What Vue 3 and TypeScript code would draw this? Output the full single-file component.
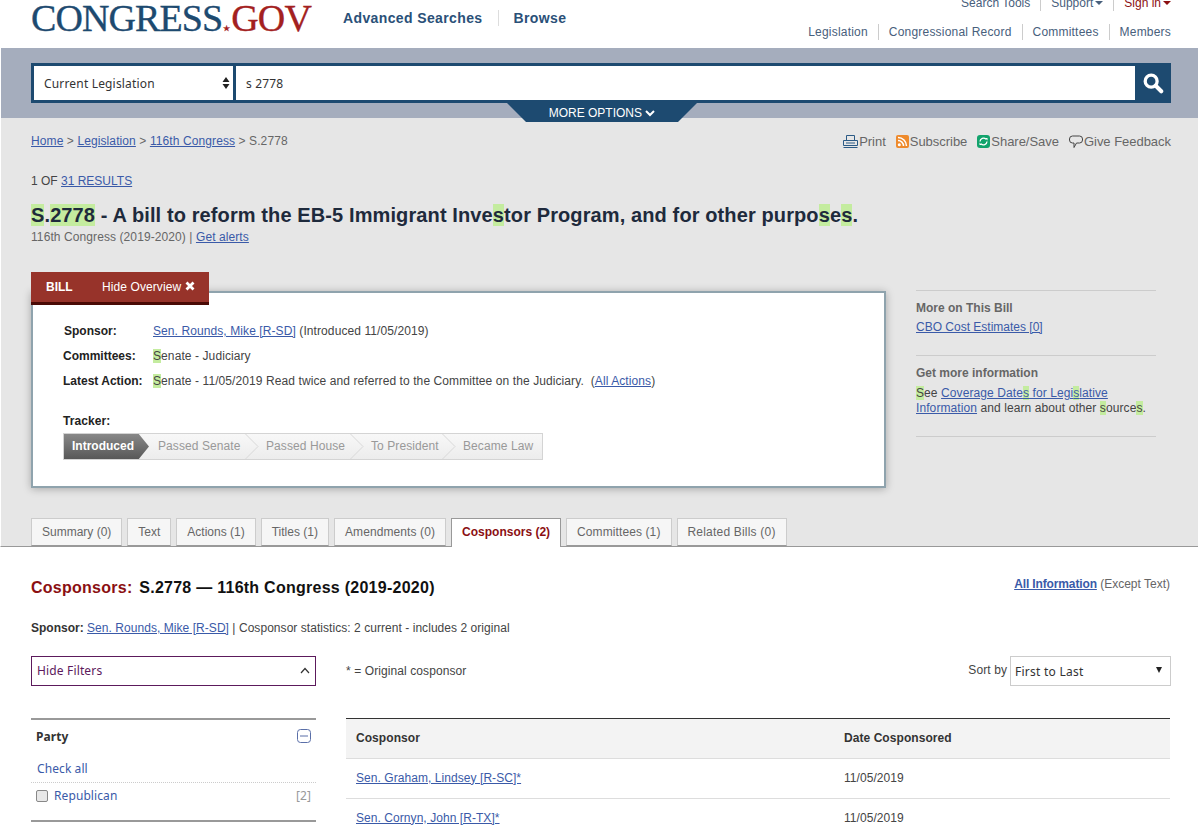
<template>
  <div class="page">
    <header class="top">
      <div class="logo">CONGRESS<span class="star">★</span><span class="gov">GOV</span></div>
      <nav class="main-nav">
        <a>Advanced Searches</a>
        <a>Browse</a>
      </nav>
      <div class="util">
        <div class="util-row first">
          <a>Search Tools</a>
          <a>Support<i class="caret"></i></a>
          <a class="signin">Sign in<i class="caret"></i></a>
        </div>
        <div class="util-row">
          <a v-for="item in collections" :key="item">{{ item }}</a>
        </div>
      </div>
    </header>

    <section class="band">
      <form class="search" @submit.prevent>
        <div class="scope">
          <span>Current Legislation</span>
          <svg width="8" height="14" viewBox="0 0 8 14"><path d="M4 1 7.500 6H.5zM4 13 .5 8h7z" fill="#222" /></svg>
        </div>
        <div class="query">s 2778</div>
        <button class="go" type="button" aria-label="Search">
          <svg width="22" height="22" viewBox="0 0 24 24"><circle cx="10" cy="10" r="6.500" fill="none" stroke="#fff" stroke-width="3.600" /><path d="m15 15 6 6" stroke="#fff" stroke-width="4.400" stroke-linecap="round" /></svg>
        </button>
      </form>
      <div class="more-wrap">
        <div class="more">MORE OPTIONS
          <svg width="10" height="8" viewBox="0 0 10 8"><path d="m1 2 4 4 4-4" fill="none" stroke="#fff" stroke-width="2" /></svg>
        </div>
      </div>
    </section>

    <section class="gray">
      <div class="crumb-row">
        <div class="crumbs"><a>Home</a> &gt; <a>Legislation</a> &gt; <a>116th Congress</a> &gt; S.2778</div>
        <div class="tools">
          <span class="tool">
            <svg width="15" height="13" viewBox="0 0 15 13"><path d="M3.500 5V.5h8V5M.5 5.500h14v5H.5zM.5 12.500h14M3 8h9" fill="none" stroke="#2b5a85" /></svg>Print
          </span>
          <span class="tool">
            <svg width="13" height="13" viewBox="0 0 13 13"><rect width="13" height="13" rx="2" fill="#ee8a2c" /><circle cx="3.300" cy="9.700" r="1.500" fill="#fff" /><path d="M2 5.500a5.500 5.500 0 0 1 5.500 5.500M2 2.500A8.500 8.500 0 0 1 10.500 11" fill="none" stroke="#fff" stroke-width="1.500" /></svg>Subscribe
          </span>
          <span class="tool">
            <svg width="13" height="13" viewBox="0 0 13 13"><rect width="13" height="13" rx="3" fill="#12a36c" /><path d="M3 6.500a3.500 3.500 0 0 1 6-2.300M10 6.500a3.500 3.500 0 0 1-6 2.300" fill="none" stroke="#fff" stroke-width="1.300" /><path d="M8 3h2.500v2.500zM5 10H2.500V7.500z" fill="#fff" /></svg>Share/Save
          </span>
          <span class="tool">
            <svg width="14" height="14" viewBox="0 0 14 14"><path d="M3.500 1h7A3 3 0 0 1 13.500 4v1a3 3 0 0 1-3 3H7.500L5 12.500V8H3.500a3 3 0 0 1-3-3V4a3 3 0 0 1 3-3z" fill="none" stroke="#444" /></svg>Give Feedback
          </span>
        </div>
      </div>

      <p class="results">1 OF <a>31 RESULTS</a></p>
      <h1 class="title"><mark>S</mark>.<mark>2778</mark> - A bill to reform the EB-5 Immigrant Inve<mark>s</mark>tor Program, and for other purpo<mark>s</mark>e<mark>s</mark>.</h1>
      <p class="session">116th Congress (2019-2020) | <a>Get alerts</a></p>

      <div class="overview-row">
        <div class="overview">
          <div class="bill-tab">
            <span class="bill-label">BILL</span>
            <span class="bill-hide">Hide Overview
              <svg width="10" height="10" viewBox="0 0 10 10"><path d="m1.500 1.500 7 7m0-7-7 7" stroke="#fff" stroke-width="2.800" /></svg>
            </span>
          </div>
          <div class="card">
            <div class="line sponsor-line"><b class="sponsor-key">Sponsor:</b><span><a>Sen. Rounds, Mike [R-SD]</a> (Introduced 11/05/2019)</span></div>
            <div class="line"><b>Committees:</b><span><mark>S</mark>enate - Judiciary</span></div>
            <div class="line"><b>Latest Action:</b><span><mark>S</mark>enate - 11/05/2019 Read twice and referred to the Committee on the Judiciary.&nbsp; (<a>All Actions</a>)</span></div>
            <div class="tracker-label">Tracker:</div>
            <ol class="tracker">
              <li v-for="(step, i) in steps" :key="step.name" :class="{ on: i === 0 }" :style="{ width: step.width + 'px' }">
                {{ step.name }}
                <svg v-if="i > 0 && i < steps.length - 1" class="chev" width="14" height="25" viewBox="0 0 14 25"><path d="M.5 0 13 12.500.5 25" fill="none" stroke="#d8d8d8" /></svg>
              </li>
            </ol>
          </div>
        </div>
        <aside class="side">
          <div class="side-block first-block">
            <h3>More on This Bill</h3>
            <p><a>CBO Cost Estimates [0]</a></p>
          </div>
          <div class="side-block">
            <h3>Get more information</h3>
            <p><mark>S</mark>ee <a>Coverage Date<mark>s</mark> for Legi<mark>s</mark>lative Information</a> and learn about other <mark>s</mark>ource<mark>s</mark>.</p>
          </div>
        </aside>
      </div>

      <div class="tabs">
        <a v-for="tab in tabs" :key="tab" class="tab" :class="{ active: tab.startsWith('Cosponsors') }">{{ tab }}</a>
      </div>
    </section>

    <section class="content">
      <div class="content-head">
        <h2><span class="red">Cosponsors:</span> S.2778 — 116th Congress (2019-2020)</h2>
        <div class="all-info"><a>All Information</a> (Except Text)</div>
      </div>
      <p class="stats"><b>Sponsor:</b> <a>Sen. Rounds, Mike [R-SD]</a> | Cosponsor statistics: 2 current - includes 2 original</p>

      <div class="cols">
        <div class="filters">
          <div class="hide-filters">
            <span>Hide Filters</span>
            <svg width="10" height="7" viewBox="0 0 10 7"><path d="m1 6 4-4.500L9 6" fill="none" stroke="#333" stroke-width="1.200" /></svg>
          </div>
          <div class="facet">
            <div class="facet-head">
              <b>Party</b>
              <svg width="14" height="14" viewBox="0 0 14 14"><rect x=".5" y=".5" width="13" height="13" rx="3" fill="none" stroke="#5a6fa8" /><path d="M3 7h8" stroke="#5a6fa8" /></svg>
            </div>
            <a class="check-all">Check all</a>
            <div class="facet-row">
              <span class="box"></span>
              <a>Republican</a>
              <span class="count">[2]</span>
            </div>
          </div>
        </div>

        <div class="results-col">
          <div class="sort-row">
            <span class="legend">* = Original cosponsor</span>
            <span class="sort-label">Sort by</span>
            <div class="sort-select"><span>First to Last</span><i class="sort-caret"></i></div>
          </div>
          <table class="cosponsors">
            <thead>
              <tr><th class="c1">Cosponsor</th><th>Date Cosponsored</th></tr>
            </thead>
            <tbody>
              <tr v-for="row in cosponsors" :key="row.name">
                <td class="c1"><a>{{ row.name }}</a></td>
                <td>{{ row.date }}</td>
              </tr>
            </tbody>
          </table>
        </div>
      </div>
    </section>
  </div>
</template>

<script setup lang="ts">
const collections = ['Legislation', 'Congressional Record', 'Committees', 'Members']

const steps = [
  { name: 'Introduced', width: 87 },
  { name: 'Passed Senate', width: 108 },
  { name: 'Passed House', width: 105 },
  { name: 'To President', width: 92 },
  { name: 'Became Law', width: 90 },
]

const tabs = [
  'Summary (0)',
  'Text',
  'Actions (1)',
  'Titles (1)',
  'Amendments (0)',
  'Cosponsors (2)',
  'Committees (1)',
  'Related Bills (0)',
]

const cosponsors = [
  { name: 'Sen. Graham, Lindsey [R-SC]*', date: '11/05/2019' },
  { name: 'Sen. Cornyn, John [R-TX]*', date: '11/05/2019' },
]
</script>

<style>
html,
body {
  margin: 0;
  background: #fff;
  overflow: hidden;
}
</style>

<style scoped>
.page {
  height: 829px;
  overflow: hidden;
  font-family: "Liberation Sans", Arial, sans-serif;
  font-size: 12px;
  letter-spacing: .09px;
  color: #444;
}

a {
  color: #3a5aa8;
  text-decoration: underline;
}

mark {
  background: #c4ec9f;
  color: inherit;
}

p {
  margin: 0;
}

/* header */
.top {
  height: 48px;
  display: flex;
  padding: 0 27px 0 31px;
}

.logo {
  font-family: "Liberation Serif", serif;
  font-size: 38px;
  line-height: 36px;
  letter-spacing: -.9px;
  -webkit-text-stroke: .35px currentColor;
  color: #1d4a70;
  width: 312px;
  white-space: nowrap;
}

.gov {
  color: #a32020;
}

.star {
  color: #a32020;
  font-size: 8px;
  letter-spacing: 0;
  margin: 0 1px;
}

.main-nav {
  display: flex;
  align-items: center;
  height: 36px;
}

.main-nav a {
  color: #2a5078;
  font-size: 14px;
  font-weight: bold;
  letter-spacing: .38px;
  text-decoration: none;
  padding-right: 15px;
}

.main-nav a + a {
  border-left: 1px solid #ddd;
  padding-left: 15px;
}

.util {
  margin-left: auto;
  margin-top: -5px;
}

.util-row {
  display: flex;
  justify-content: flex-end;
  height: 16px;
  margin-bottom: 13px;
  line-height: 16px;
  letter-spacing: .2px;
}

.util-row.first {
  letter-spacing: 0;
}

.util-row a {
  color: #48607c;
  text-decoration: none;
  padding: 0 10px;
  border-left: 1px solid #ccc;
}

.util-row a:first-child {
  border-left: 0;
}

.util-row a:last-child {
  padding-right: 0;
}

.util-row .signin {
  color: #8b0f12;
}

.caret {
  display: inline-block;
  margin-left: 2px;
  vertical-align: 2px;
  border: 4px solid transparent;
  border-top-color: currentColor;
  border-bottom: 0;
}

/* search band */
.band {
  background: #a5adbd;
  height: 70px;
  padding: 15px 27px 0 30px;
  border-left: 1px solid #fff;
  box-sizing: border-box;
  position: relative;
  z-index: 2;
}

.search {
  display: flex;
  height: 40px;
  box-sizing: border-box;
  border: 3px solid #1d4a70;
  border-right: 0;
  background: #fff;
  font-family: "Noto Sans", sans-serif;
  font-size: 12px;
  letter-spacing: .17px;
  color: #333;
}

.scope {
  flex: none;
  display: flex;
  align-items: center;
  justify-content: space-between;
  padding: 0 3px 0 10px;
  box-sizing: border-box;
  border-right: 3px solid #1d4a70;
  width: 202px;
}

.query {
  flex: 1;
  padding: 0 10px;
  line-height: 35px;
}

.go {
  width: 36px;
  height: 40px;
  margin-top: -3px;
  border: 0;
  padding: 0;
  background: #1d4a70;
  display: flex;
  align-items: center;
  justify-content: center;
}

.more-wrap {
  display: flex;
  justify-content: center;
  margin-left: 2px;
}

.more {
  width: 190px;
  height: 19px;
  line-height: 20px;
  letter-spacing: 0;
  background: #1d4a70;
  color: #fff;
  text-align: center;
  clip-path: polygon(0 0, 100% 0, 90% 100%, 10% 100%);
}

/* gray area */
.gray {
  background: #e6e6e6;
  height: 429px;
  padding: 0 27px 0 30px;
  border-left: 1px solid #fff;
  box-sizing: border-box;
  border-bottom: 1px solid #999;
  position: relative;
}

.crumb-row {
  display: flex;
  justify-content: space-between;
  align-items: center;
  padding-top: 15px;
  height: 16px;
  color: #666;
}

.crumbs {
  letter-spacing: .1px;
}

.tools {
  display: flex;
  gap: 10px;
  font-size: 13px;
  letter-spacing: -.03px;
  color: #666;
  margin-top: 1px;
}

.tool {
  display: flex;
  align-items: center;
  gap: 1px;
}

.results {
  margin-top: 24px;
  line-height: 16px;
  letter-spacing: 0;
  color: #444;
}

.title {
  margin: 14px 0 0;
  font-size: 20px;
  line-height: 24px;
  font-weight: bold;
  color: #1e2a3c;
  letter-spacing: .11px;
}

.session {
  line-height: 16px;
  color: #666;
  margin-top: 2px;
}

.overview-row {
  display: flex;
  margin-top: 27px;
}

.overview {
  width: 855px;
  flex: none;
}

.bill-tab {
  width: 178px;
  height: 33px;
  box-sizing: border-box;
  display: flex;
  align-items: center;
  background: #97332a;
  border-bottom: 3px solid #4a0a05;
  color: #fff;
  margin-bottom: -14px;
  position: relative;
  z-index: 1;
}

.bill-label {
  font-weight: bold;
  padding-left: 15px;
  width: 71px;
  box-sizing: border-box;
  letter-spacing: 0;
}

.card {
  height: 197px;
  box-sizing: border-box;
  background: #fff;
  border: 2px solid #8fa3ad;
  box-shadow: 0 1px 8px rgba(0, 0, 0, .28);
  padding: 28px 0 0 30px;
  color: #444;
}

.line {
  display: flex;
  height: 25px;
  line-height: 20px;
}

.line b {
  width: 90px;
  color: #222;
  flex: none;
  letter-spacing: 0;
}

.sponsor-key {
  padding-left: 1px;
  box-sizing: border-box;
}

.tracker-label {
  margin-top: 18px;
  font-weight: bold;
  color: #222;
  line-height: 14px;
}

.tracker {
  display: flex;
  list-style: none;
  margin: 5px 0 0;
  padding: 0;
  width: 480px;
  height: 27px;
  box-sizing: border-box;
  background: linear-gradient(#f8f8f8, #ececec);
  border: 1px solid #d4d4d4;
  overflow: hidden;
}

.tracker li {
  position: relative;
  flex: none;
  padding-left: 16px;
  box-sizing: border-box;
  line-height: 24px;
  color: #999;
  white-space: nowrap;
}

.chev {
  position: absolute;
  top: 0;
  right: -9px;
}

.tracker .on {
  padding-left: 9px;
  margin: -1px -8px -1px -1px;
  line-height: 26px;
  background: linear-gradient(#8a8a8a, #565656);
  color: #fff;
  font-weight: bold;
  letter-spacing: 0;
  clip-path: polygon(0 0, 75px 0, 86px 50%, 75px 100%, 0 100%);
  z-index: 1;
}

.side {
  width: 240px;
  margin-left: 30px;
  margin-top: 18px;
  color: #444;
}

.side-block {
  border-top: 1px solid #ccc;
  padding: 10px 0 0;
  height: 54px;
}

.side-block + .side-block {
  height: 82px;
  border-bottom: 1px solid #ccc;
  box-sizing: border-box;
}

.side-block + .side-block h3 {
  margin-bottom: 6px;
}

.side h3 {
  margin: 0 0 5px;
  font-size: 12px;
  line-height: 14px;
  letter-spacing: 0;
  color: #666;
}

.side p {
  line-height: 15px;
}

.first-block p {
  letter-spacing: 0;
}

/* tabs */
.tabs {
  position: absolute;
  left: 30px;
  bottom: -1px;
  display: flex;
  gap: 5px;
}

.tab {
  display: block;
  height: 28px;
  box-sizing: border-box;
  padding: 0 10px;
  line-height: 27px;
  letter-spacing: 0;
  background: #f6f6f6;
  border: 1px solid #ccc;
  border-bottom: 1px solid #999;
  color: #666;
  text-decoration: none;
}

.tab:nth-child(n + 5) {
  letter-spacing: .1px;
}

.tab:last-child {
  letter-spacing: .2px;
}

.tab.active {
  height: 29px;
  background: #fff;
  border-color: #999;
  border-bottom: 0;
  color: #8b0f12;
  font-weight: bold;
  letter-spacing: 0;
}

/* content */
.content {
  padding: 0 28px 0 31px;
}

.content-head {
  display: flex;
  justify-content: space-between;
  padding-top: 30px;
  height: 32px;
}

.content-head h2 {
  margin: 0;
  font-size: 16px;
  line-height: 22px;
  letter-spacing: .26px;
  color: #111;
}

.red {
  color: #8b0f12;
  margin-right: 2px;
}

.all-info {
  color: #666;
  line-height: 16px;
  margin-top: -1px;
  letter-spacing: 0;
}

.all-info a {
  font-weight: bold;
  letter-spacing: -.13px;
}

.stats {
  margin-top: 11px;
  line-height: 16px;
  letter-spacing: .05px;
}

.stats b {
  color: #333;
  letter-spacing: 0;
}

.cols {
  display: flex;
  gap: 30px;
  margin-top: 20px;
}

.filters {
  width: 285px;
  flex: none;
}

.hide-filters {
  height: 30px;
  box-sizing: border-box;
  border: 1px solid #5c1a5c;
  display: flex;
  align-items: center;
  justify-content: space-between;
  padding: 0 5px 2px;
  font-family: "Noto Sans", sans-serif;
  font-size: 12px;
  letter-spacing: .15px;
  color: #5c1a5c;
  background: #fff;
}

.facet {
  margin-top: 32px;
  border-top: 2px solid #999;
  border-bottom: 2px solid #999;
  height: 104px;
  box-sizing: border-box;
  font-family: "Noto Sans", sans-serif;
}

.facet-head {
  display: flex;
  justify-content: space-between;
  align-items: center;
  padding: 0 5px;
  height: 32px;
  font-size: 12px;
  color: #333;
}

.check-all {
  display: block;
  padding: 0 0 5px 6px;
  margin-top: 8px;
  height: 17px;
  line-height: 17px;
  text-decoration: none;
  border-bottom: 1px dotted #ccc;
}

.facet-row {
  display: flex;
  align-items: center;
  padding: 4px 5px 0;
}

.facet-row a {
  text-decoration: none;
  margin-left: 6px;
}

.box {
  width: 12px;
  height: 12px;
  box-sizing: border-box;
  border: 1px solid #888;
  border-radius: 2px;
  background: #e8e8e8;
}

.count {
  margin-left: auto;
  color: #999;
}

.results-col {
  flex: 1;
}

.sort-row {
  display: flex;
  align-items: center;
  height: 30px;
}

.legend {
  margin-right: auto;
}

.sort-label {
  margin-right: 3px;
  margin-top: -3px;
}

.sort-select {
  width: 161px;
  height: 30px;
  margin-right: -1px;
  box-sizing: border-box;
  border: 1px solid #ccc;
  display: flex;
  align-items: center;
  justify-content: space-between;
  padding: 0 8px 0 4px;
  font-family: "Noto Sans", sans-serif;
  font-size: 12px;
  letter-spacing: .25px;
  color: #333;
}

.sort-caret {
  border: 3.500px solid transparent;
  border-top: 6px solid #222;
  border-bottom: 0;
  margin-top: -3px;
}

.cosponsors {
  width: 100%;
  margin-top: 32px;
  border-collapse: collapse;
  border-top: 1px solid #333;
  font-size: 12px;
  letter-spacing: .06px;
}

.cosponsors th {
  text-align: left;
  background: #f3f3f3;
  height: 40px;
  padding: 0 0 1px 10px;
  box-sizing: border-box;
  color: #333;
  border-bottom: 1px solid #ddd;
}

.cosponsors td {
  height: 40px;
  padding: 0 0 2px 10px;
  box-sizing: border-box;
  border-bottom: 1px solid #ddd;
}

.c1 {
  width: 488px;
}
</style>
